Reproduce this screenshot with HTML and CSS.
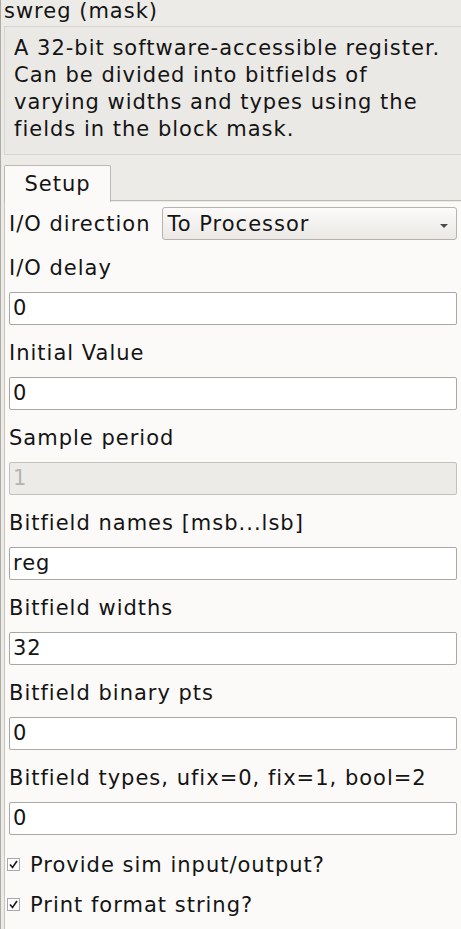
FILE: index.html
```html
<!DOCTYPE html>
<html>
<head>
<meta charset="utf-8">
<link rel="stylesheet" href="styles.css">
</head>
<body>
<div class="app">
  <div class="title">swreg (mask)</div>
  <div class="desc">A 32-bit software-accessible register.<br>Can be divided into bitfields of<br>varying widths and types using the<br>fields in the block mask.</div>
  <div class="tabs">
    <div class="tab">Setup</div>
    <div class="tab-rest"></div>
  </div>
  <div class="pane">
    <div class="row-inline">
      <span class="label">I/O direction</span>
      <div class="combo"><span>To Processor</span><span class="arrow"></span></div>
    </div>
    <div class="label">I/O delay</div>
    <div class="input">0</div>
    <div class="label">Initial Value</div>
    <div class="input">0</div>
    <div class="label">Sample period</div>
    <div class="input disabled">1</div>
    <div class="label">Bitfield names [msb...lsb]</div>
    <div class="input">reg</div>
    <div class="label">Bitfield widths</div>
    <div class="input">32</div>
    <div class="label">Bitfield binary pts</div>
    <div class="input">0</div>
    <div class="label">Bitfield types, ufix=0, fix=1, bool=2</div>
    <div class="input">0</div>
    <div class="check first">
      <span class="box"><svg width="11" height="11" viewBox="0 0 11 11"><path d="M2 5.5 L4.5 8.5 L9 2" fill="none" stroke="#1a1a1a" stroke-width="1.6"/></svg></span>
      <span>Provide sim input/output?</span>
    </div>
    <div class="check">
      <span class="box"><svg width="11" height="11" viewBox="0 0 11 11"><path d="M2 5.5 L4.5 8.5 L9 2" fill="none" stroke="#1a1a1a" stroke-width="1.6"/></svg></span>
      <span>Print format string?</span>
    </div>
  </div>
</div>
</body>
</html>
```
FILE: styles.css
```css
html, body {
  margin: 0;
  padding: 0;
  height: 100%;
}
body {
  background: #edebe8;
  font-family: "DejaVu Sans", sans-serif;
  font-size: 21px;
  letter-spacing: 1px;
  color: #141414;
  overflow: hidden;
}
.app {
  border-left: 1px solid #aeaaa6;
  padding-left: 3px;
  min-height: 100%;
  box-sizing: border-box;
  display: flex;
  flex-direction: column;
}
.title {
  line-height: 22px;
  height: 22px;
  white-space: nowrap;
}
.desc {
  margin-top: 4px;
  border: 1px solid #d8d5d1;
  border-right: none;
  background: #ebe9e6;
  padding: 8px 0 11px 9px;
  line-height: 27px;
  white-space: nowrap;
}
.tabs {
  margin-top: 10px;
  display: flex;
  align-items: stretch;
}
.tab {
  width: 105px;
  height: 36px;
  border: 1px solid #bdb9b5;
  border-bottom: none;
  border-radius: 2px 2px 0 0;
  background: #fcfaf8;
  text-align: center;
  line-height: 36px;
}
.tab-rest {
  flex: 1;
  border-bottom: 1px solid #bdb9b5;
  margin-bottom: 1px;
}
.pane {
  flex: 1;
  background: #fcfaf8;
  border-left: 1px solid #c8c4c0;
  padding: 5px 4px 0 4px;
  display: flex;
  flex-direction: column;
}
.row-inline {
  display: flex;
  align-items: center;
  gap: 11px;
  height: 33px;
}
.label {
  line-height: 24px;
  height: 24px;
  margin-top: 16px;
  margin-bottom: 12px;
  white-space: nowrap;
}
.row-inline .label {
  margin: 0;
}
.combo {
  flex: 1;
  height: 33px;
  box-sizing: border-box;
  border: 1px solid #b6b2ae;
  border-radius: 3px;
  background: linear-gradient(#fcfbfa, #ebe8e5);
  display: flex;
  align-items: center;
  justify-content: space-between;
  padding: 0 8px 0 5px;
}
.arrow {
  width: 0;
  height: 0;
  border-left: 4px solid transparent;
  border-right: 4px solid transparent;
  border-top: 4px solid #4a4a4a;
  margin-top: 4px;
}
.input {
  height: 33px;
  box-sizing: border-box;
  border: 1px solid #aaa7a3;
  border-radius: 2px;
  background: #ffffff;
  padding: 0 3px;
  line-height: 31px;
}
.input.disabled {
  background: #edebe8;
  border-color: #c4c1bd;
  color: #b7b4b0;
}
.check {
  display: flex;
  align-items: center;
  height: 24px;
  margin-top: 16px;
  margin-left: -2px;
}
.check.first {
  margin-top: 18px;
}
.box {
  width: 11px;
  height: 11px;
  border: 1px solid #a9a9a9;
  background: #fff;
  display: flex;
  align-items: center;
  justify-content: center;
  margin-right: 10px;
  margin-top: -2px;
}
.box svg {
  display: block;
}
```
